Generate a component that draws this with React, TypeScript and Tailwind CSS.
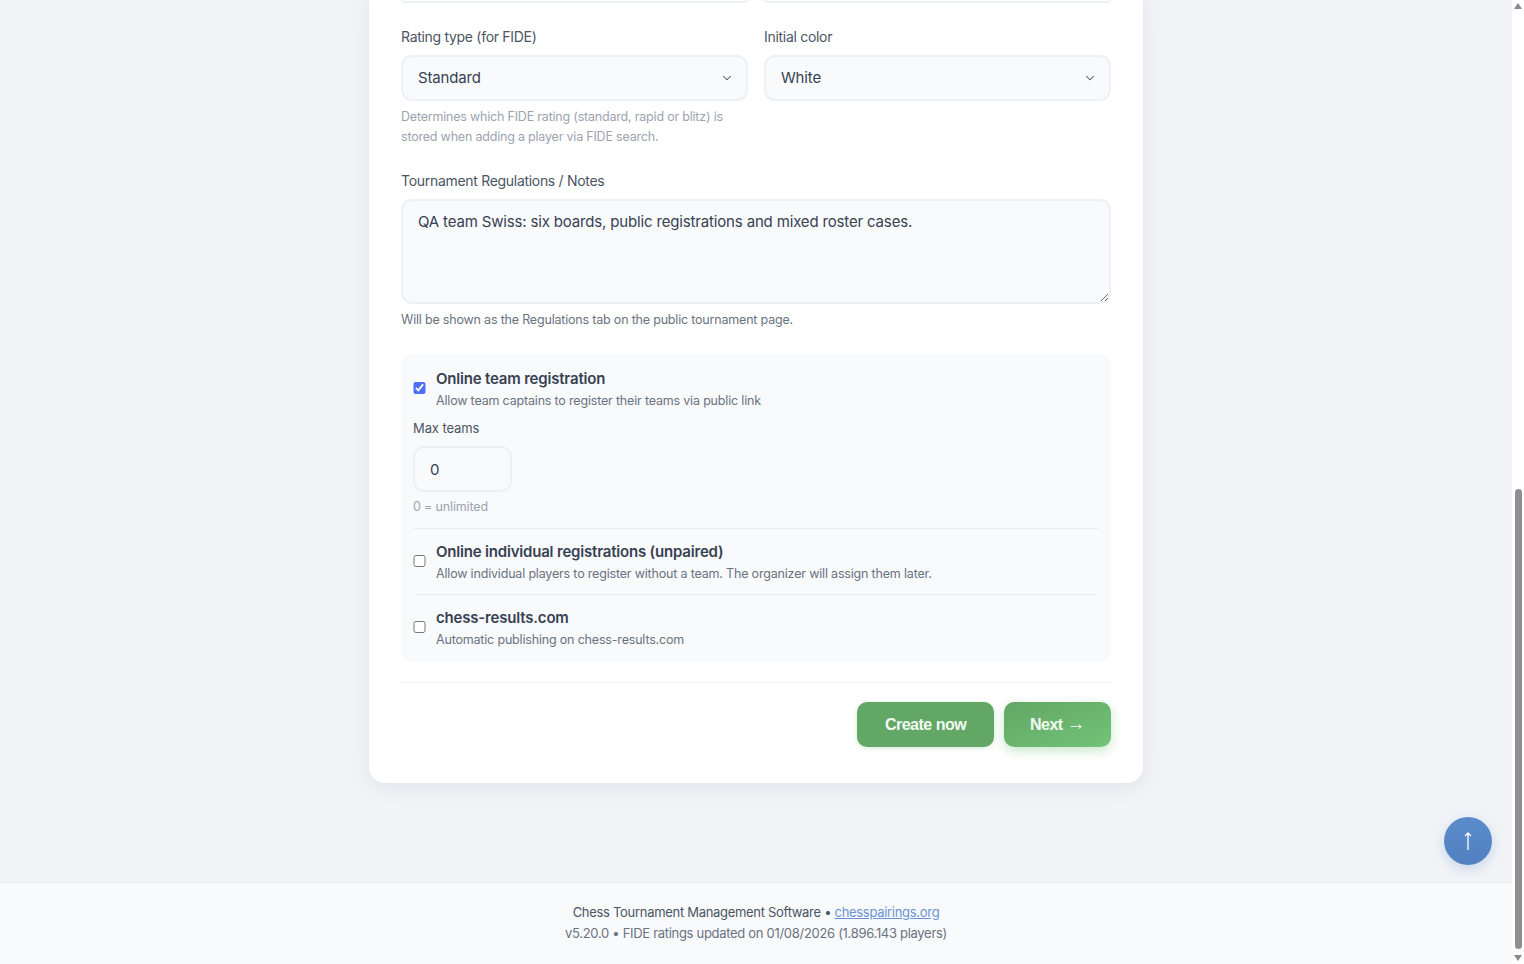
import { ChevronDown } from "lucide-react";

const font = { label: "text-[14px] leading-[20px] font-normal text-[#4b5563] tracking-[-0.3px]" };

function SelectField({ label, value }: { label: string; value: string }) {
  return (
    <div>
      <label className={`block mb-[8px] ${font.label}`}>{label}</label>
      <div className="relative">
        <select
          defaultValue={value}
          className="w-full h-[46px] appearance-none rounded-[11px] border-2 border-[#edf1f6] bg-[#f8fafc] pl-[15px] pr-8 text-[15px] text-[#374151] tracking-[-0.16px] outline-none"
        >
          <option>{value}</option>
        </select>
        <ChevronDown className="absolute right-[14px] top-[16px] w-[14px] h-[14px] text-[#4b5563]" strokeWidth={1.75} />
      </div>
    </div>
  );
}

function OptionRow({ title, desc, checked }: { title: string; desc: string; checked?: boolean }) {
  return (
    <label className="flex items-center gap-[10.5px]">
      <input type="checkbox" defaultChecked={checked} className="w-[12.5px] h-[12.5px] mt-[-3px] accent-[#4f6ef7]" />
      <span className="block">
        <span className="block text-[15px] leading-[22px] font-semibold text-[#374151] tracking-[-0.19px]">{title}</span>
        <span className="block text-[12.5px] leading-[21px] text-[#6b7280] tracking-[-0.18px]">{desc}</span>
      </span>
    </label>
  );
}

export default function App() {
  return (
    <div className="relative flex h-[964px] overflow-hidden bg-[#f1f3f7] font-['Inter',sans-serif]">
      <div className="flex flex-1 flex-col">
        <main className="flex-1 flex justify-center">
          <div className="w-[774px] h-[783px] rounded-b-[16px] bg-white px-[32px] shadow-[0_4px_20px_rgba(15,23,42,0.07)]">
            <div className="grid grid-cols-2 gap-[16px] h-[3px]">
              <div className="rounded-b-[11px] border-2 border-t-0 border-[#edf1f6]" />
              <div className="rounded-b-[11px] border-2 border-t-0 border-[#edf1f6]" />
            </div>

            <div className="grid grid-cols-2 gap-[16px] pt-[24px]">
              <SelectField label="Rating type (for FIDE)" value="Standard" />
              <SelectField label="Initial color" value="White" />
            </div>
            <p className="mt-[6px] w-[340px] text-[12.5px] leading-[20px] text-[#9ca3af] tracking-[-0.2px]">
              Determines which FIDE rating (standard, rapid or blitz) is stored when adding a player via FIDE search.
            </p>

            <label className={`block mt-[24px] mb-[8px] ${font.label}`}>Tournament Regulations / Notes</label>
            <textarea
              defaultValue="QA team Swiss: six boards, public registrations and mixed roster cases."
              className="block w-full h-[105px] rounded-[11px] border-2 border-[#edf1f6] bg-[#f8fafc] px-[15px] pt-[11px] pb-[12px] text-[15px] leading-[20px] text-[#374151] tracking-[-0.16px] outline-none"
            />
            <p className="mt-[6px] text-[12.5px] leading-[20px] text-[#6b7280] tracking-[-0.19px]">
              Will be shown as the Regulations tab on the public tournament page.
            </p>

            <section className="mt-[24px] h-[308px] rounded-[11px] bg-[#f8fafc] px-[12px] pt-[14px]">
              <OptionRow title="Online team registration" desc="Allow team captains to register their teams via public link" checked />
              <label className="block mt-[7px] mb-[8px] text-[13px] leading-[20px] font-normal text-[#4b5563] tracking-[-0.1px]">Max teams</label>
              <input
                defaultValue="0"
                className="block w-[99px] h-[46px] rounded-[11px] border-2 border-[#edf1f6] bg-[#f8fafc] px-[15px] text-[15px] text-[#374151] outline-none"
              />
              <p className="mt-[5px] text-[12.5px] leading-[20px] text-[#9ca3af] tracking-[-0.15px]">0 = unlimited</p>
              <div className="mt-[11px] border-t border-[#e9edf3] pt-[12px] pb-[10px]">
                <OptionRow title="Online individual registrations (unpaired)" desc="Allow individual players to register without a team. The organizer will assign them later." />
              </div>
              <div className="border-t border-[#e9edf3] pt-[12px]">
                <OptionRow title="chess-results.com" desc="Automatic publishing on chess-results.com" />
              </div>
            </section>

            <div className="mt-[20px] border-t border-[#f1f3f7] pt-[19px] flex justify-end gap-[10px] font-['Liberation_Sans',sans-serif]">
              <button className="h-[45px] w-[137px] rounded-[10px] bg-[#62a766] text-[16px] tracking-[-0.5px] font-bold text-[#f3faf3] shadow-[0_1px_4px_rgba(76,175,80,0.25)]">
                Create now
              </button>
              <button className="h-[45px] w-[107px] rounded-[10px] bg-gradient-to-br from-[#62a766] to-[#72c377] text-[16px] tracking-[-0.5px] font-bold text-[#f3faf3] shadow-[0_4px_12px_rgba(76,175,80,0.3)]">
                Next <span className="font-normal font-['Liberation_Serif',serif] text-[19px] leading-none">→</span>
              </button>
            </div>
          </div>
        </main>

        <footer className="h-[82px] border-t border-[#e9edf3] bg-[#f8fafc] pt-[19px] text-center text-[13px] leading-[21px] text-[#6b7280] tracking-[-0.3px]">
          <p className="text-[#4b5563]">
            Chess Tournament Management Software • <a href="#" className="text-[#6b93d3] underline">chesspairings.org</a>
          </p>
          <p>v5.20.0 • FIDE ratings updated on 01/08/2026 (1.896.143 players)</p>
        </footer>
      </div>

      <div className="relative w-[12px] bg-white">
        <div className="absolute left-[2px] top-[3px] w-0 h-0 border-x-[4px] border-x-transparent border-b-[6px] border-b-[#8a8a8a]" />
        <div className="absolute left-[3px] top-[489px] w-[7px] h-[460px] rounded-full bg-[#8f8f8f]" />
        <div className="absolute left-[2px] bottom-[3px] w-0 h-0 border-x-[4px] border-x-transparent border-t-[6px] border-t-[#8a8a8a]" />
      </div>

      <button className="absolute left-[1444px] top-[817px] flex h-[48px] w-[48px] items-center justify-center rounded-full bg-gradient-to-b from-[#5a8bcb] to-[#5080c0] text-[20px] text-white shadow-[0_4px_12px_rgba(74,126,194,0.25)]">
        <svg width="12" height="20" viewBox="0 0 12 20" fill="none" stroke="white" strokeWidth="1.3">
          <path d="M6 19V2M3 5 6 2l3 3" />
        </svg>
      </button>
    </div>
  );
}
